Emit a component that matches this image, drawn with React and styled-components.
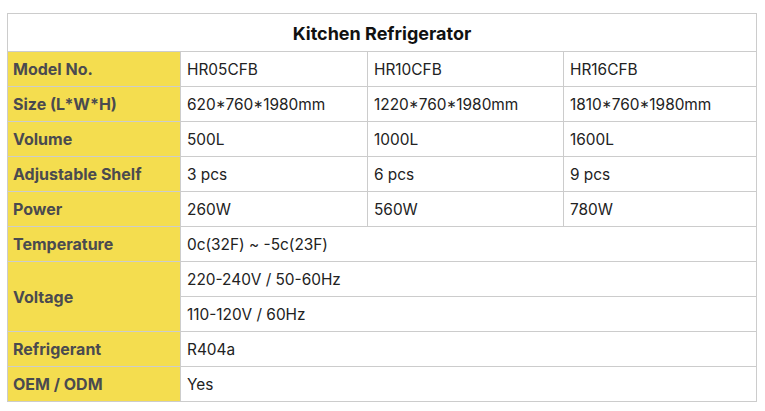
import React from "react";
import styled, { createGlobalStyle } from "styled-components";

const GlobalStyle = createGlobalStyle`
  body {
    margin: 0;
    background: #ffffff;
    font-family: Inter, "Noto Sans", sans-serif;
  }
`;

const Page = styled.div`
  padding: 13px 8px 10px 7px;
`;

const Table = styled.div`
  display: grid;
  grid-template-columns: 173px 187px 196px 193px;
  grid-template-rows: 38px;
  grid-auto-rows: 35px;
  border-top: 1px solid #cccccc;
  border-left: 1px solid #cccccc;
  width: 750px;
  box-sizing: border-box;
`;

const Cell = styled.div`
  display: flex;
  align-items: center;
  box-sizing: border-box;
  padding: 0 6px 0 6px;
  border-right: 1px solid #cccccc;
  border-bottom: 1px solid #cccccc;
  font-size: 15.4px;
  color: #222222;
  grid-column: ${props => (props.span ? `span ${props.span}` : "auto")};
  grid-row: ${props => (props.rows ? `span ${props.rows}` : "auto")};
`;

const Title = styled(Cell)`
  grid-column: 1 / -1;
  justify-content: center;
  font-size: 18px;
  font-weight: 700;
  color: #111111;
  padding-top: 2px;
`;

const Label = styled(Cell)`
  background: #f4dd4f;
  font-size: 16px;
  font-weight: 700;
  color: #4a4a4f;
  padding-left: 5px;
`;

const rows = [
  ["Model No.", ["HR05CFB", "HR10CFB", "HR16CFB"]],
  ["Size (L*W*H)", ["620*760*1980mm", "1220*760*1980mm", "1810*760*1980mm"]],
  ["Volume", ["500L", "1000L", "1600L"]],
  ["Adjustable Shelf", ["3 pcs", "6 pcs", "9 pcs"]],
  ["Power", ["260W", "560W", "780W"]]
];

export default function App() {
  return (
    <Page>
      <GlobalStyle />
      <Table>
        <Title>Kitchen Refrigerator</Title>
        {rows.map(([label, values]) => (
          <React.Fragment key={label}>
            <Label>{label}</Label>
            {values.map(v => (
              <Cell key={v}>{v}</Cell>
            ))}
          </React.Fragment>
        ))}
        <Label>Temperature</Label>
        <Cell span={3}>0c(32F) ~ -5c(23F)</Cell>
        <Label rows={2}>Voltage</Label>
        <Cell span={3}>220-240V / 50-60Hz</Cell>
        <Cell span={3}>110-120V / 60Hz</Cell>
        <Label>Refrigerant</Label>
        <Cell span={3}>R404a</Cell>
        <Label>OEM / ODM</Label>
        <Cell span={3}>Yes</Cell>
      </Table>
    </Page>
  );
}
